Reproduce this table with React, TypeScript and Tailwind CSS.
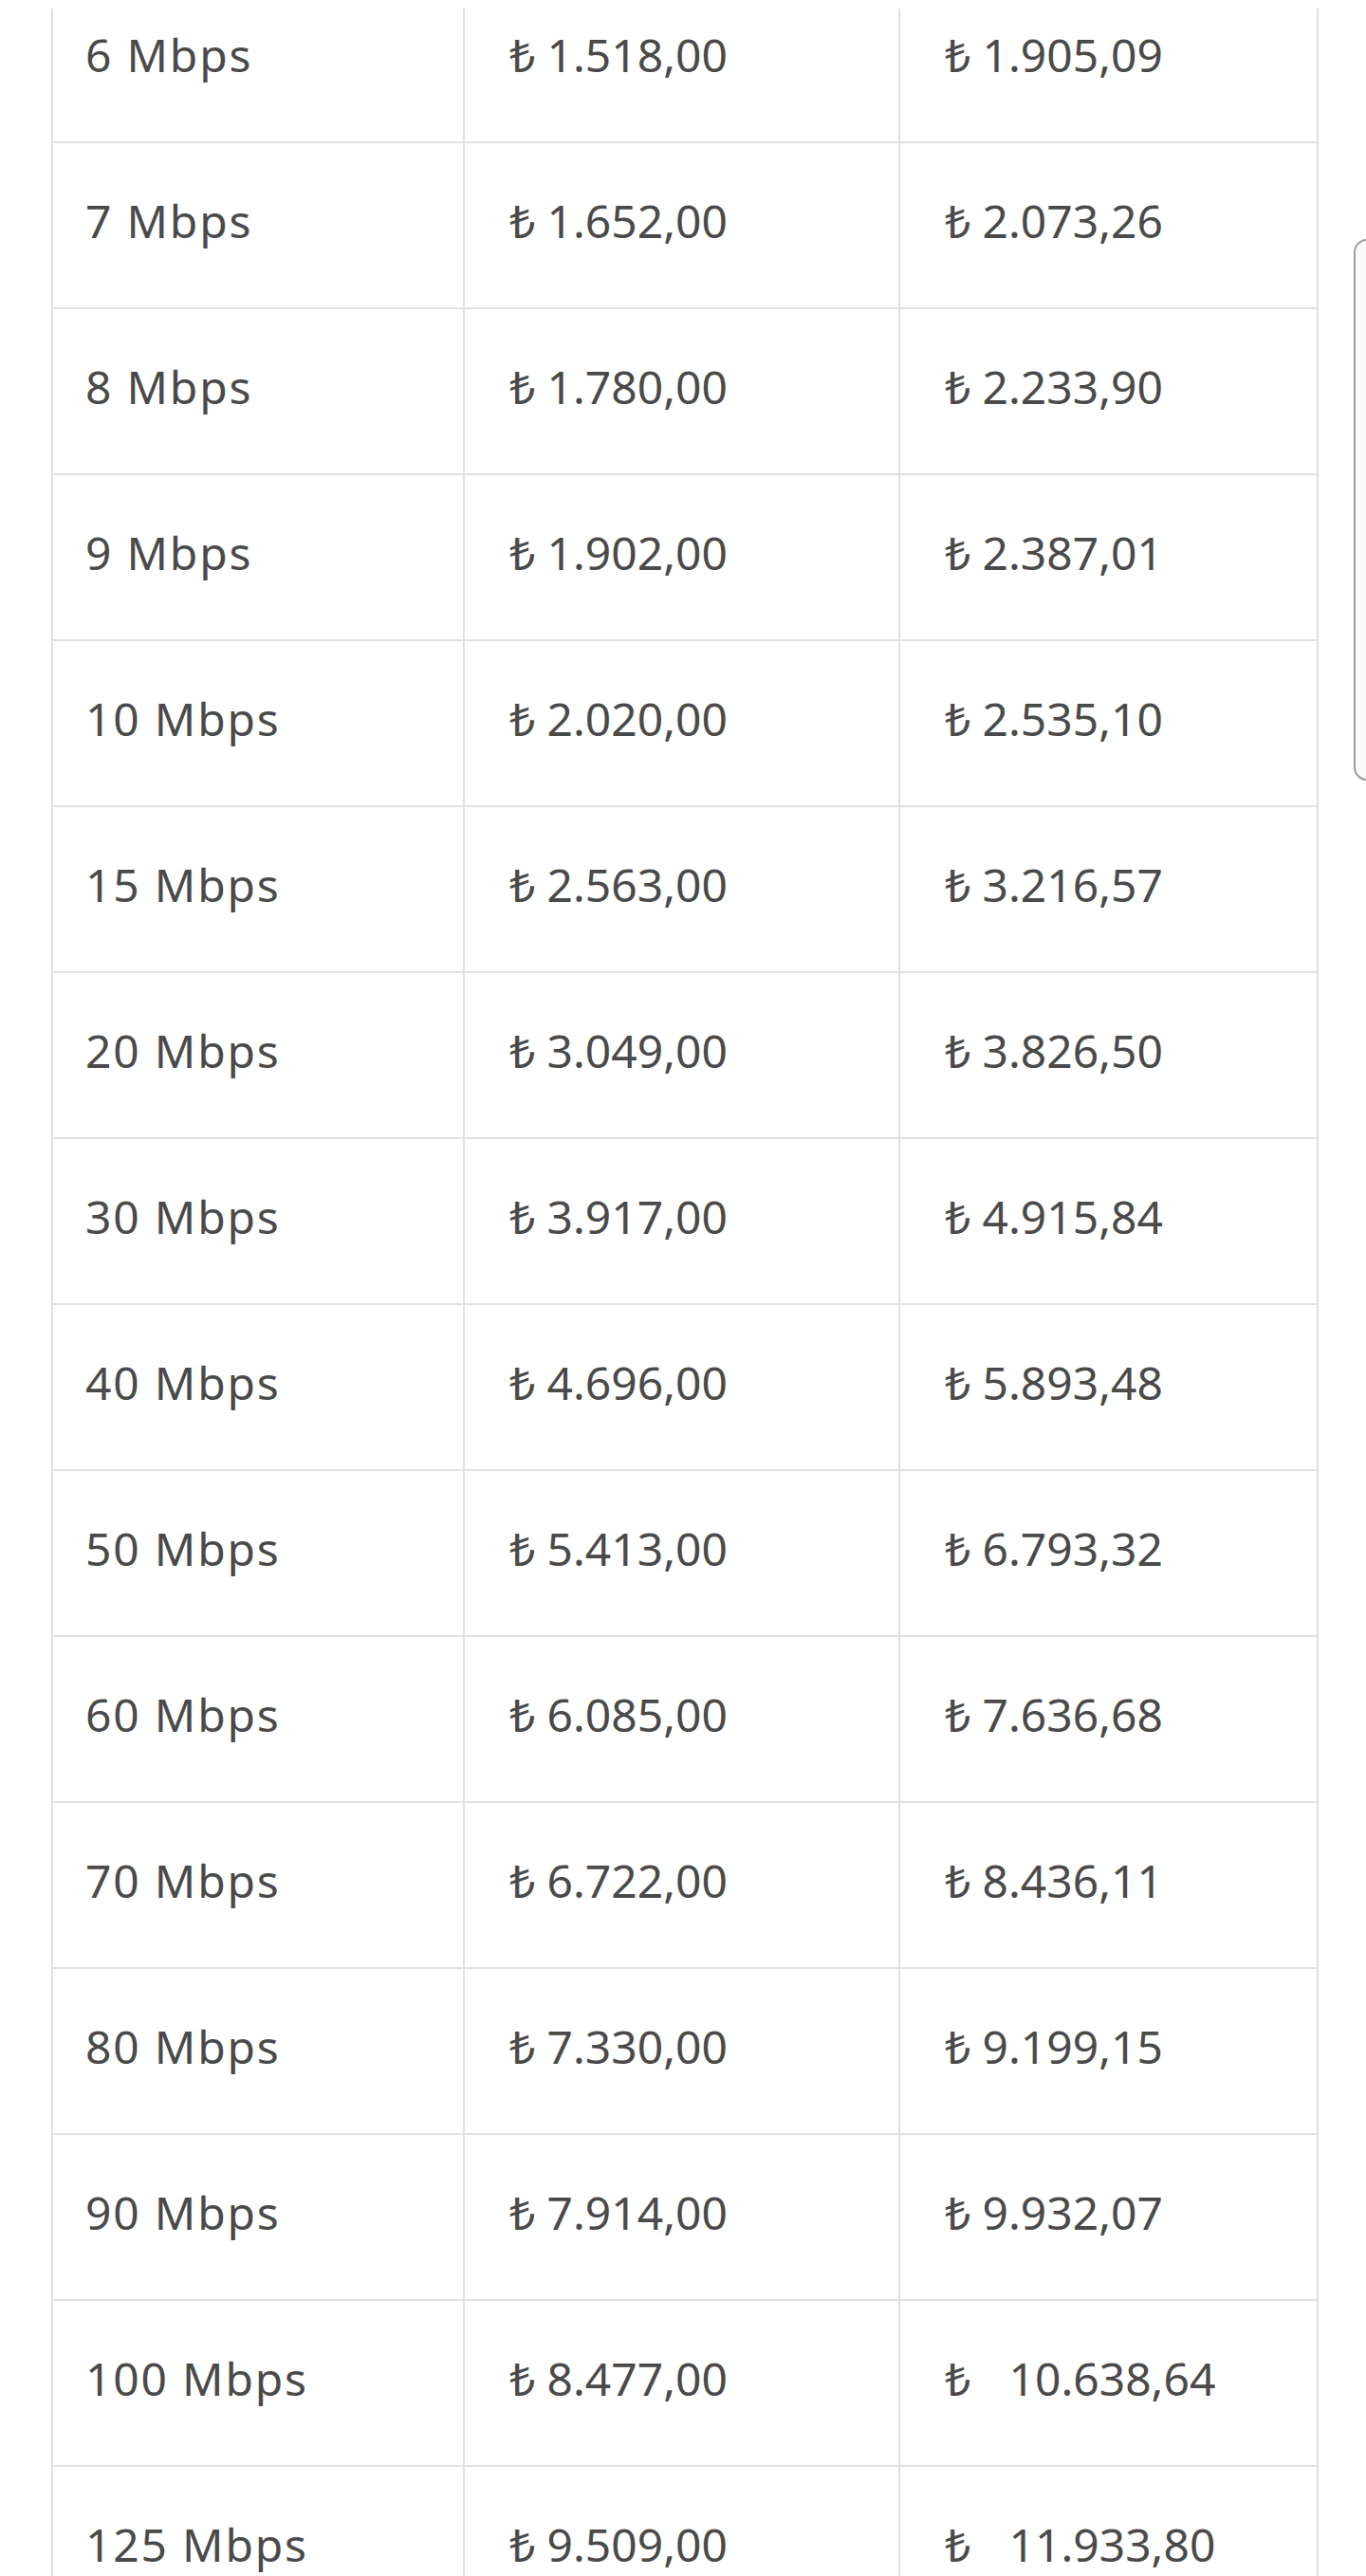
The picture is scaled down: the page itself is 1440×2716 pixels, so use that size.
import React from "react";

const rows = [
  { speed: "6 Mbps", net: "1.518,00", gross: "1.905,09" },
  { speed: "7 Mbps", net: "1.652,00", gross: "2.073,26" },
  { speed: "8 Mbps", net: "1.780,00", gross: "2.233,90" },
  { speed: "9 Mbps", net: "1.902,00", gross: "2.387,01" },
  { speed: "10 Mbps", net: "2.020,00", gross: "2.535,10" },
  { speed: "15 Mbps", net: "2.563,00", gross: "3.216,57" },
  { speed: "20 Mbps", net: "3.049,00", gross: "3.826,50" },
  { speed: "30 Mbps", net: "3.917,00", gross: "4.915,84" },
  { speed: "40 Mbps", net: "4.696,00", gross: "5.893,48" },
  { speed: "50 Mbps", net: "5.413,00", gross: "6.793,32" },
  { speed: "60 Mbps", net: "6.085,00", gross: "7.636,68" },
  { speed: "70 Mbps", net: "6.722,00", gross: "8.436,11" },
  { speed: "80 Mbps", net: "7.330,00", gross: "9.199,15" },
  { speed: "90 Mbps", net: "7.914,00", gross: "9.932,07" },
  { speed: "100 Mbps", net: "8.477,00", gross: "10.638,64", wide: true },
  { speed: "125 Mbps", net: "9.509,00", gross: "11.933,80", wide: true },
];

const Price = ({ value, wide }: { value: string; wide?: boolean }) => (
  <span className="whitespace-nowrap">
    <span>₺</span>
    <span className={wide ? "ml-[40px]" : "ml-[12px]"}>{value}</span>
  </span>
);

export default function App() {
  return (
    <div
      className="relative h-[2716px] w-[1440px] overflow-hidden bg-white pt-[9px] text-[48px] text-[#4a4a4a]"
      style={{ fontFamily: '"Noto Sans", "DejaVu Sans", sans-serif' }}
    >
      <div className="h-full overflow-hidden">
        {/* Price table */}
        <div className="ml-[54px] mt-[-33px] w-[1336px] border-x-2 border-[#e1e1e1]">
          {rows.map((row) => (
            <div
              key={row.speed}
              className="grid h-[175px] grid-cols-[434px_459px_1fr] border-b-2 border-[#e1e1e1]"
            >
              <div className="flex items-center border-r-2 border-[#e1e1e1] pb-[10px] pl-[34px] tracking-[1.8px]">
                {row.speed}
              </div>
              <div className="flex items-center border-r-2 border-[#e1e1e1] pb-[10px] pl-[47px]">
                <Price value={row.net} />
              </div>
              <div className="flex items-center pb-[10px] pl-[47px]">
                <Price value={row.gross} wide={row.wide} />
              </div>
            </div>
          ))}
        </div>
      </div>

      {/* Floating side handle */}
      <div className="absolute left-[1427px] top-[252px] h-[571px] w-[40px] rounded-[14px] border-2 border-[#9e9e9e] bg-[#fafafa]" />
    </div>
  );
}
